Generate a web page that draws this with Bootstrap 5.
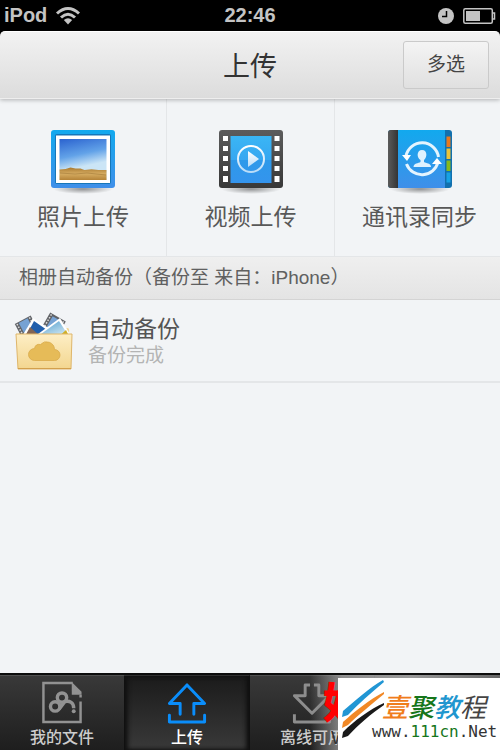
<!DOCTYPE html>
<html lang="zh-CN">
<head>
<meta charset="utf-8">
<meta name="viewport" content="width=device-width, initial-scale=1">
<title>上传</title>
<link href="https://cdn.jsdelivr.net/npm/bootstrap@5.3.0/dist/css/bootstrap.min.css" rel="stylesheet">
<style>
body{font-family:"Liberation Sans","Noto Sans CJK SC",sans-serif;background:#000;color:#555}
svg{display:block;flex:none}
.screen{background:#f2f4f6}
.status{height:31px;background:#000;color:#c4c4c4;font-size:20px;line-height:31px}
.side{flex:1 1 0}
.titlebar{height:68px;background:linear-gradient(#f2f2f2,#dcdcdc);border-top:1px solid #fff;border-bottom:1px solid #eee;border-radius:5px 5px 0 0;box-shadow:0 1px 4px rgba(0,0,0,.28);position:relative}
.titlebar h1{font-size:27px;line-height:32px;padding-top:3px;color:#333;font-weight:400}
.pick{width:86px;height:48px;margin-right:11px;font-size:19px;line-height:24px;color:#444;background:linear-gradient(#f4f4f4,#e0e0e0);border:1px solid #cacaca;border-radius:3px}
.corner{background:#000}
.tile{flex:0 0 33.4%;height:157px;padding:31px 0 0;border:0;border-right:1px solid #e4e6e8;background:transparent;color:#585858;font-size:23px;line-height:30px}
.tile:nth-child(2){flex-basis:33.6%}
.tile:last-child{flex:1 1 0;padding-left:4px;border:0}
.group-head{height:44px;padding:0 19px;font-size:19px;line-height:42px;font-weight:400;color:#606060;background:linear-gradient(#efefef,#e4e4e4);border-top:1px solid #e4e6e8;border-bottom:1px solid #d4d4d4;white-space:nowrap}
.entry{height:83px;padding:2px 14px 0;gap:14px;border-bottom:2px solid #e4e6e8;color:#555}
.entry-name{font-size:23px;line-height:28px}
.entry-note{font-size:19px;line-height:26px;color:#b4b4b4}
.tabs{height:77px;background:linear-gradient(#393939,#1e1e1e);border-top:2px solid #0c0c0c;position:relative}
.tab{width:25%;padding-top:5px;color:#ccc;font-size:16px;line-height:20px;font-weight:500;border-top:1px solid #505050;border-right:1px solid #101010;white-space:nowrap}
.tab.current{background:linear-gradient(#1b1b1b,#393939);color:#fff;border-top-color:#303030;box-shadow:inset 3px 0 4px #111,inset -3px 0 4px #111}
.tab span,.tab svg{position:relative;z-index:1}
.haze{position:absolute;left:310px;right:0;top:0;bottom:0;background:linear-gradient(90deg,rgba(170,170,170,0),rgba(170,170,170,.75) 32px,#999 100px,#666)}
.stamp{position:absolute;z-index:2;left:323px;top:6px;font-size:42px;line-height:46px;font-weight:900;color:#f00}
.stamp-w{position:absolute;z-index:2;left:331px;top:52px;font-size:18px;line-height:22px;color:#333}
.site{position:absolute;z-index:3;right:0;bottom:0;width:162px;height:72px;background:#fff;overflow:hidden;white-space:nowrap}
.site svg{position:absolute;left:2px;top:2px}
.site-name{position:absolute;left:44px;top:13px;font-size:26px;line-height:34px;font-weight:500;font-style:italic}
.site-url{position:absolute;left:34px;top:43px;font:16px/22px "DejaVu Sans Mono",monospace;color:#333}
.c-orange{color:#f07d1c}.c-green{color:#16761b}.c-blue{color:#2196cf}.c-gray{color:#444;font-weight:400}
</style>
<script src="https://cdn.jsdelivr.net/npm/bootstrap@5.3.0/dist/js/bootstrap.bundle.min.js"></script>
</head>
<body>
<div class="screen d-flex flex-column min-vh-100">
  <div class="status d-flex px-1 fw-bold">
    <div class="side d-flex align-items-center gap-2"><span>iPod</span>
      <svg width="26" height="20" viewBox="0 0 26 20" fill="none" stroke="#c4c4c4" stroke-width="3"><path d="M2 7.5Q13-2.500 24 7.500M6 11.500Q13 5 20 11.500"/><path d="M13 18.500 8.800 14Q13 10.500 17.200 14Z" fill="#c4c4c4" stroke="none"/></svg>
    </div>
    <span>22:46</span>
    <div class="side d-flex align-items-center justify-content-end gap-2">
      <svg width="16" height="16" viewBox="0 0 16 16"><circle cx="8" cy="8" r="8" fill="#c4c4c4"/><path d="M8.500 3v5.500H4" fill="none" stroke="#000" stroke-width="1.500"/></svg>
      <svg width="34" height="16" viewBox="0 0 34 16"><rect x="1.800" y=".8" width="28.500" height="14.400" rx="1.500" fill="none" stroke="#c4c4c4" stroke-width="1.500"/><path d="M4 3h14v10H4Z" fill="#c4c4c4"/><path d="M30.500 5h2v6h-2" fill="none" stroke="#c4c4c4" stroke-width="1.500"/></svg>
    </div>
  </div>
  <div class="corner">
    <header class="titlebar d-flex align-items-center">
      <div class="side"></div>
      <h1 class="m-0">上传</h1>
      <div class="side d-flex justify-content-end"><button type="button" class="pick p-0">多选</button></div>
    </header>
  </div>

  <main class="flex-grow-1">
    <div class="d-flex">
      <button type="button" class="tile d-flex flex-column align-items-center gap-2">
        <svg width="68" height="64" viewBox="0 0 68 64">
          <defs>
            <linearGradient id="frameBlue" x1="0" y1="0" x2="0" y2="1"><stop stop-color="#12a9ee"/><stop offset="1" stop-color="#3f8fe9"/></linearGradient>
            <linearGradient id="sky" x1="0" y1="0" x2=".25" y2="1"><stop stop-color="#2a62cf"/><stop offset=".45" stop-color="#62a2e8"/><stop offset=".75" stop-color="#cbe5f6"/></linearGradient>
            <linearGradient id="field" x1="0" y1="0" x2="0" y2="1"><stop stop-color="#a9792f"/><stop offset=".5" stop-color="#d6ac62"/><stop offset="1" stop-color="#b58438"/></linearGradient>
            <radialGradient id="shade"><stop stop-color="#000" stop-opacity=".4"/><stop offset="1" stop-color="#000" stop-opacity="0"/></radialGradient>
          </defs>
          <ellipse cx="34" cy="59" rx="30" ry="5" fill="url(#shade)"/>
          <rect x="2" y="0" width="64" height="58" rx="3" fill="url(#frameBlue)"/>
          <rect x="6" y="4" width="56" height="50" rx="2" fill="#1676b8"/><rect x="7" y="5.500" width="54" height="47.500" fill="#fff"/>
          <path d="M10.500 9h47v41h-47Z" fill="url(#sky)"/>
          <path d="M10.500 39.500l6-.5 5-1.500 5 1 5 0 4 1.500 7-.8 7 .8 8 0v10h-47Z" fill="url(#field)"/><path d="M11 43l15 1 12-1 19 2" stroke="#98702f" stroke-opacity=".5" fill="none"/>
        </svg>
        <span>照片上传</span>
      </button>
      <button type="button" class="tile d-flex flex-column align-items-center gap-2">
        <svg width="68" height="64" viewBox="0 0 68 64">
          <defs><linearGradient id="film" x1="0" y1="0" x2="0" y2="1"><stop stop-color="#5c5c5c"/><stop offset="1" stop-color="#383838"/></linearGradient>
          <linearGradient id="filmBlue" x1="0" y1="0" x2="0" y2="1"><stop stop-color="#3ab6f5"/><stop offset=".5" stop-color="#36a7f1"/><stop offset=".52" stop-color="#2e99ea"/><stop offset="1" stop-color="#3494ed"/></linearGradient>
          <linearGradient id="playWhite" x1="0" y1="0" x2="0" y2="1"><stop stop-color="#fff"/><stop offset="1" stop-color="#b9dcf8"/></linearGradient></defs>
          <ellipse cx="34" cy="59" rx="30" ry="5" fill="url(#shade)"/>
          <rect x="2" y="0" width="64" height="58" rx="3" fill="url(#film)"/>
          <path d="M13.500 6h41v47h-41Z" fill="url(#filmBlue)"/>
          <path fill="#fff" d="M6 6h5v5H6zm0 10h5v5H6zm0 10h5v5H6zm0 10h5v5H6zm0 10h5v6H6zM57.500 6h5v5h-5zm0 10h5v5h-5zm0 10h5v5h-5zm0 10h5v5h-5zm0 10h5v6h-5z"/>
          <circle cx="34" cy="29" r="13" fill="none" stroke="url(#playWhite)" stroke-width="2"/><path d="M31 21v16l11-8Z" fill="url(#playWhite)"/>
        </svg>
        <span>视频上传</span>
      </button>
      <button type="button" class="tile d-flex flex-column align-items-center gap-2">
        <svg width="68" height="64" viewBox="0 0 68 64">
          <defs><linearGradient id="spine"><stop stop-color="#5b5b5b"/><stop offset="1" stop-color="#343434"/></linearGradient></defs>
          <ellipse cx="34" cy="59" rx="30" ry="5" fill="url(#shade)"/>
          <rect x="2" y="0" width="64" height="58" rx="3" fill="#1270ae"/>
          <path d="M12 0h47v58H12Z" fill="url(#frameBlue)"/><path d="M12 0v58H5q-3 0-3-3V3q0-3 3-3Z" fill="url(#spine)"/>
          <path fill="#e8781e" d="M60.500 6.500h4v10.500h-4z"/><path fill="#e9c33a" d="M60.500 18.500h4v10.500h-4z"/><path fill="#86b91c" d="M60.500 30.500h4v10.500h-4z"/><path fill="#17a2e4" d="M60.500 42.500h4v10h-4z"/>
          <path d="M20 26A16.500 16.500 0 0 1 52.500 27M52 32A16.500 16.500 0 0 1 20.500 34" fill="none" stroke="#e4f4fe" stroke-width="3"/>
          <path d="M16 25h9l-4 6ZM46 34l5-6 5 6Z" fill="#fff"/>
          <path d="M36 20c6 0 5 8 2 10v2c2 1.500 7 1 7 5H27.500c0-4 5-3.500 7-5v-2c-4-2-4-10 1.500-10Z" fill="#dff2fe"/>
        </svg>
        <span>通讯录同步</span>
      </button>
    </div>
    <h2 class="group-head m-0">相册自动备份（备份至 来自：iPhone）</h2>
    <a href="#" class="entry d-flex align-items-center text-decoration-none">
      <svg width="60" height="60" viewBox="0 0 60 60">
        <defs><linearGradient id="paper" x1="0" y1="0" x2="0" y2="1"><stop stop-color="#fdeec5"/><stop offset="1" stop-color="#f3d68f"/></linearGradient>
        <linearGradient id="shot" x1="0" y1="0" x2=".6" y2="1"><stop stop-color="#4f9ccd"/><stop offset="1" stop-color="#d9edf6"/></linearGradient></defs>
        <path d="M5 28v-8q1-5 4-3h42q5-3 4 4v7Z" fill="#f0d594"/>
        <g transform="rotate(-28 12 14)"><path d="M3 7h18v16H3Z" fill="#626469"/><path d="M7 8h10v13H7Z" fill="#76a2d3"/><path d="M5 8v14M19 8v14" stroke="#ddd" stroke-width="1.500" stroke-dasharray="1.500 1.500"/></g>
        <g transform="rotate(30 40 12)"><path d="M31 4h18v16H31Z" fill="#606266"/><path d="M35 6h10v13H35Z" fill="#76a2d3"/><path d="M33 5v14M47 5v14" stroke="#ddd" stroke-width="1.500" stroke-dasharray="1.500 1.500"/></g>
        <path d="M19 6 36 17 30 26H7Z" fill="#fff"/><path d="M20 9 33 18 29 26H11Z" fill="#215fac"/><path d="M16 15 26 24 25 26H10Z" fill="#806455"/>
        <path d="M24 22 46 6 57 24 54 27H25Z" fill="#fff"/><path d="M27 22 45 9 54 23 52 27H29Z" fill="url(#shot)"/><path d="M42 27 52 18 55 24 53 27Z" fill="#cfaf27"/>
        <path d="M2 22h56l-1 35H4Z" fill="url(#paper)" stroke="#dfb66b"/><path d="M4 56.500h53" stroke="#d3a04c"/>
        <path d="M22 48a6 6 0 0 1 0-12q1-5 6-4a8 8 0 0 1 14 5 5.500 5.500 0 0 1 0 11Z" transform="translate(-1.500 .5)" fill="#e6bb58" stroke="#d9ab4b" stroke-width=".8"/>
      </svg>
      <span class="d-flex flex-column"><span class="entry-name">自动备份</span><span class="entry-note">备份完成</span></span>
    </a>
  </main>

  <nav class="tabs d-flex overflow-hidden">
    <a href="#" class="tab d-flex flex-column align-items-center gap-1 text-decoration-none">
      <svg width="42" height="43" viewBox="0 0 42 44" fill="none" stroke="#929292" stroke-width="2.500"><path d="M40 21v21H2V2h30M40 17v-3"/><path d="M31 1l10 10v3H31Z" fill="#929292" stroke="none"/><g stroke-width="3.500"><circle cx="21" cy="17" r="4.800"/><circle cx="14" cy="26" r="4.800"/><path d="M18 29 24 21c5-1 9 1 9 7"/></g><circle cx="33" cy="31" r="2" fill="#929292" stroke="none"/></svg>
      <span>我的文件</span>
    </a>
    <a href="#" aria-current="page" class="tab current d-flex flex-column align-items-center gap-1 text-decoration-none">
      <svg width="42" height="43" viewBox="0 0 42 44" fill="none" stroke="#0a8dfa" stroke-width="3" stroke-linejoin="round" stroke-linecap="round"><path d="M14 34V23H3L21 4l18 19H28v11"/><path d="M3 35v7h36v-7"/></svg>
      <span>上传</span>
    </a>
    <a href="#" class="tab d-flex flex-column align-items-center gap-1 text-decoration-none">
      <svg width="42" height="43" viewBox="0 0 42 44" fill="none" stroke="#8d8d8d" stroke-width="3" stroke-linejoin="round"><path d="M19 4h-5v11H3l18 18 18-18H28V4h-5"/><path d="M3 34v8h36v-8"/></svg>
      <span>离线可用</span>
    </a>
    <div class="haze"></div>
    <span class="stamp">好</span><span class="stamp-w">W</span>
    <div class="site">
      <svg width="46" height="62" viewBox="0 0 46 62"><path d="M43 0C30 7 14 22 3 31L2 37 8 35C18 24 31 13 44 2Z" fill="#2196d4"/><path d="M44 12C30 19 14 32 3 42L2 48 8 45C18 35 31 25 44 14Z" fill="#f18825"/><path d="M44 23C30 29 14 41 3 52L2 58 8 56C18 45 31 34 44 25Z" fill="#191919"/></svg>
      <div class="site-name"><span class="c-orange">壹</span><span class="c-green">聚</span><span class="c-blue">教</span><span class="c-gray">程</span></div>
      <div class="site-url">www.<span class="c-green">111cn</span>.Net</div>
    </div>
  </nav>
</div>
</body>
</html>
